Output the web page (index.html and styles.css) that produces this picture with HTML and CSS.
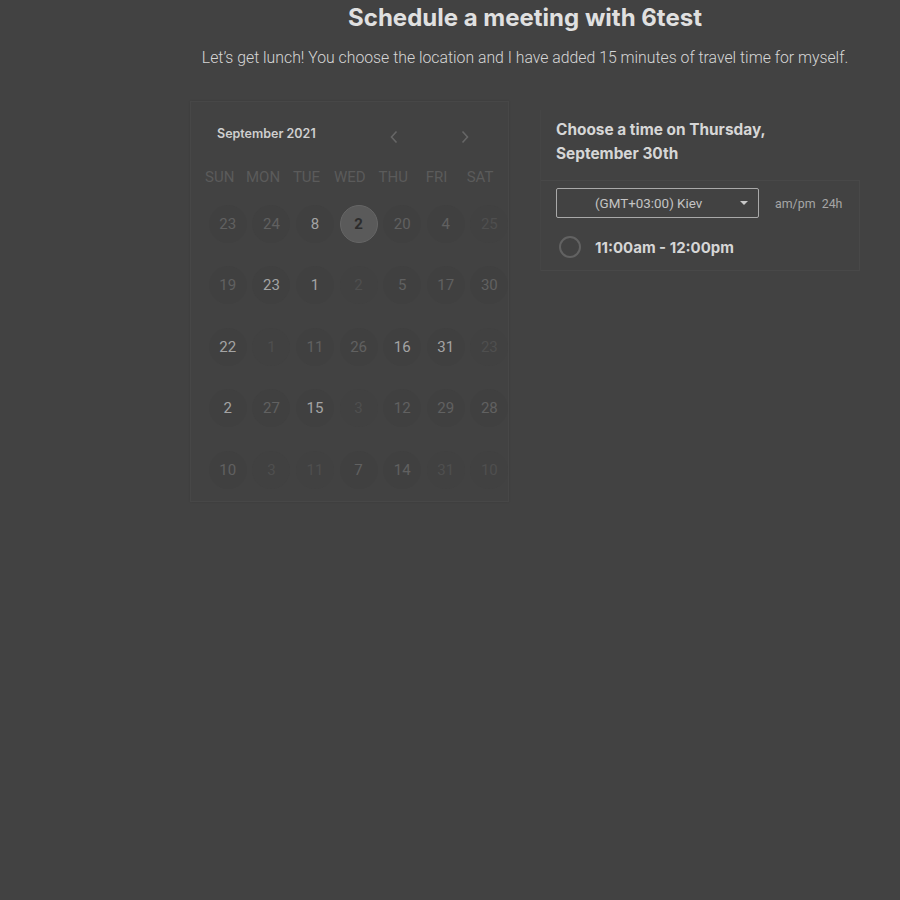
FILE: index.html
```html
<!DOCTYPE html>
<html>
<head>
<meta charset="utf-8">
<link rel="stylesheet" href="styles.css">
</head>
<body>
<div class="page">
  <header class="intro">
    <h1 class="title">Schedule a meeting with 6test</h1>
    <p class="subtitle">Let’s get lunch! You choose the location and I have added 15 minutes of travel time for myself.</p>
  </header>
  <main class="main">
    <section class="calendar">
      <div class="cal-head">
        <span class="month">September 2021</span>
        <div class="nav">
          <svg class="chev" width="10" height="14" viewBox="0 0 10 14"><path d="M7.5 1.5 L2.5 7 L7.5 12.5" fill="none" stroke="currentColor" stroke-width="1.6"/></svg>
          <svg class="chev" width="10" height="14" viewBox="0 0 10 14"><path d="M2.5 1.5 L7.5 7 L2.5 12.5" fill="none" stroke="currentColor" stroke-width="1.6"/></svg>
        </div>
      </div>
      <div class="weekdays">
        <span>SUN</span><span>MON</span><span>TUE</span><span>WED</span><span>THU</span><span>FRI</span><span>SAT</span>
      </div>
      <div class="days">
        <span class="day dim">23</span><span class="day dim">24</span><span class="day on">8</span><span class="day sel">2</span><span class="day dim">20</span><span class="day dim">4</span><span class="day faint">25</span>
        <span class="day dim">19</span><span class="day on">23</span><span class="day on">1</span><span class="day faint">2</span><span class="day dim">5</span><span class="day dim">17</span><span class="day dim">30</span>
        <span class="day on">22</span><span class="day faint">1</span><span class="day dim">11</span><span class="day dim">26</span><span class="day on">16</span><span class="day on">31</span><span class="day faint">23</span>
        <span class="day on">2</span><span class="day dim">27</span><span class="day on">15</span><span class="day faint">3</span><span class="day dim">12</span><span class="day dim">29</span><span class="day dim">28</span>
        <span class="day dim">10</span><span class="day faint">3</span><span class="day faint">11</span><span class="day dim">7</span><span class="day dim">14</span><span class="day faint">31</span><span class="day faint">10</span>
      </div>
    </section>
    <section class="times">
      <h2 class="times-title">Choose a time on Thursday,<br>September 30th</h2>
      <div class="times-body">
        <div class="tz-row">
          <div class="tz-select">
            <span class="tz-text">(GMT+03:00) Kiev</span>
            <svg class="caret" width="8" height="4" viewBox="0 0 8 4"><path d="M0 0 H8 L4 4 Z" fill="currentColor"/></svg>
          </div>
          <span class="fmt">am/pm&nbsp; 24h</span>
        </div>
        <div class="slot">
          <span class="radio"></span>
          <span class="slot-text">11:00am - 12:00pm</span>
        </div>
      </div>
    </section>
  </main>
</div>
</body>
</html>
```
FILE: styles.css
```css
html, body {
  margin: 0;
  background: #424242;
  height: 100%;
}
body {
  font-family: Roboto, "Liberation Sans", sans-serif;
  color: #cfcfcf;
}
.page {
  padding: 0 40px 0 190px;
}
.intro {
  text-align: center;
}
.title {
  margin: 0;
  padding-top: 3px;
  font-family: Inter, Roboto, sans-serif;
  font-weight: 700;
  font-size: 24px;
  line-height: 30px;
  color: #e0e0e0;
}
.subtitle {
  margin: 14px 0 0;
  font-size: 15.8px;
  line-height: 22px;
  font-weight: 300;
  color: #d6d6d6;
}
.main {
  display: flex;
  align-items: flex-start;
  gap: 31px;
  margin-top: 32px;
}
.calendar {
  width: 319px;
  height: 401px;
  box-sizing: border-box;
  border: 1px solid #474747;
  box-shadow: 0 0 2px rgba(0,0,0,0.1);
}
.cal-head {
  display: flex;
  align-items: center;
  height: 30px;
  margin-top: 16px;
  padding-left: 26px;
}
.month {
  font-family: Inter, Roboto, sans-serif;
  font-weight: 600;
  font-size: 12.5px;
  color: #cfcfcf;
  width: 172px;
}
.nav {
  display: flex;
  gap: 61px;
  margin-top: 8px;
}
.chev {
  color: #666;
  display: block;
}
.weekdays {
  display: grid;
  grid-template-columns: repeat(7, 43.4px);
  padding-left: 7px;
  margin-top: 19px;
  font-size: 15px;
  line-height: 20px;
  color: #5b5b5b;
  text-align: center;
}
.days {
  display: grid;
  grid-template-columns: repeat(7, 43.6px);
  grid-auto-rows: 61.5px;
  padding-left: 15px;
  margin-top: 6px;
  align-items: center;
  justify-items: center;
}
.day {
  width: 38px;
  height: 38px;
  border-radius: 50%;
  background: #404040;
  display: flex;
  align-items: center;
  justify-content: center;
  font-size: 15px;
}
.day.on { color: #a4a4a4; }
.day.dim { color: #616161; }
.day.faint { color: #4f4f4f; background: #414141; }
.day.sel {
  background: #5a5a5a;
  border: 1px solid #666;
  box-sizing: border-box;
  color: #2c2c2c;
  font-weight: 700;
}
.times {
  width: 320px;
  margin-top: 9px;
  border-left: 1px solid #454545;
}
.times-title {
  margin: 0;
  padding: 8px 15px 14px;
  font-family: Inter, Roboto, sans-serif;
  font-weight: 700;
  font-size: 15.4px;
  line-height: 24px;
  color: #d6d6d6;
}
.times-body {
  border: 1px solid #484848;
  border-left: 0;
  padding: 7px 15px 12px;
}
.tz-row {
  display: flex;
  align-items: center;
  gap: 16px;
}
.tz-select {
  width: 203px;
  height: 30px;
  box-sizing: border-box;
  border: 1px solid #a9a9a9;
  border-radius: 2px;
  display: flex;
  align-items: center;
  padding: 0 10px 0 38px;
  font-size: 13.4px;
  color: #c4c4c4;
}
.tz-text {
  flex: 1;
}
.caret {
  color: #c8c8c8;
  display: block;
}
.fmt {
  font-size: 12.4px;
  color: #a6a6a6;
}
.slot {
  display: flex;
  align-items: center;
  gap: 14px;
  margin-top: 18px;
  padding-left: 3px;
}
.radio {
  width: 22px;
  height: 22px;
  box-sizing: border-box;
  border: 2px solid #626262;
  border-radius: 50%;
}
.slot-text {
  font-family: Inter, Roboto, sans-serif;
  font-weight: 700;
  font-size: 15px;
  color: #d6d6d6;
}
```
